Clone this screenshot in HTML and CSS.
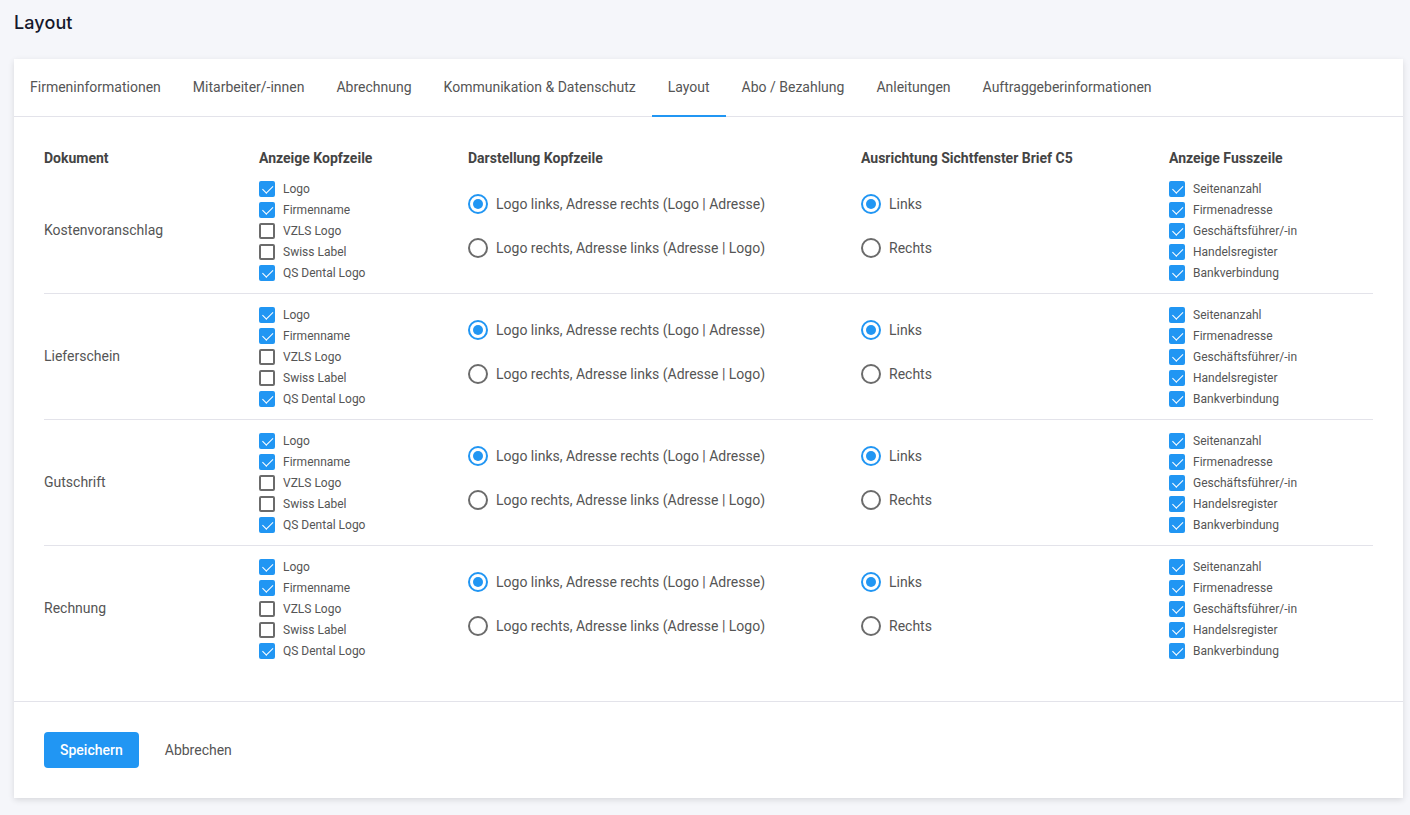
FILE: index.html
```html
<!DOCTYPE html>
<html lang="de">
<head>
<meta charset="utf-8">
<title>Layout</title>
<link rel="stylesheet" href="styles.css">
</head>
<body>
<h1 class="page-title">Layout</h1>
<div class="card">
  <nav class="tabs">
    <span class="tab">Firmeninformationen</span>
    <span class="tab">Mitarbeiter/-innen</span>
    <span class="tab">Abrechnung</span>
    <span class="tab">Kommunikation &amp; Datenschutz</span>
    <span class="tab active">Layout</span>
    <span class="tab">Abo / Bezahlung</span>
    <span class="tab">Anleitungen</span>
    <span class="tab">Auftraggeberinformationen</span>
  </nav>
  <div class="content">
    <div class="grid head">
      <div>Dokument</div>
      <div>Anzeige Kopfzeile</div>
      <div>Darstellung Kopfzeile</div>
      <div>Ausrichtung Sichtfenster Brief C5</div>
      <div>Anzeige Fusszeile</div>
    </div>

    <div class="grid row">
      <div class="doc">Kostenvoranschlag</div>
      <div class="checks">
        <label class="cb"><span class="box on"></span>Logo</label>
        <label class="cb"><span class="box on"></span>Firmenname</label>
        <label class="cb"><span class="box"></span>VZLS Logo</label>
        <label class="cb"><span class="box"></span>Swiss Label</label>
        <label class="cb"><span class="box on"></span>QS Dental Logo</label>
      </div>
      <div class="radios">
        <label class="rd"><span class="circle on"></span>Logo links, Adresse rechts (Logo | Adresse)</label>
        <label class="rd"><span class="circle"></span>Logo rechts, Adresse links (Adresse | Logo)</label>
      </div>
      <div class="radios">
        <label class="rd"><span class="circle on"></span>Links</label>
        <label class="rd"><span class="circle"></span>Rechts</label>
      </div>
      <div class="checks">
        <label class="cb"><span class="box on"></span>Seitenanzahl</label>
        <label class="cb"><span class="box on"></span>Firmenadresse</label>
        <label class="cb"><span class="box on"></span>Geschäftsführer/-in</label>
        <label class="cb"><span class="box on"></span>Handelsregister</label>
        <label class="cb"><span class="box on"></span>Bankverbindung</label>
      </div>
    </div>

    <div class="grid row">
      <div class="doc">Lieferschein</div>
      <div class="checks">
        <label class="cb"><span class="box on"></span>Logo</label>
        <label class="cb"><span class="box on"></span>Firmenname</label>
        <label class="cb"><span class="box"></span>VZLS Logo</label>
        <label class="cb"><span class="box"></span>Swiss Label</label>
        <label class="cb"><span class="box on"></span>QS Dental Logo</label>
      </div>
      <div class="radios">
        <label class="rd"><span class="circle on"></span>Logo links, Adresse rechts (Logo | Adresse)</label>
        <label class="rd"><span class="circle"></span>Logo rechts, Adresse links (Adresse | Logo)</label>
      </div>
      <div class="radios">
        <label class="rd"><span class="circle on"></span>Links</label>
        <label class="rd"><span class="circle"></span>Rechts</label>
      </div>
      <div class="checks">
        <label class="cb"><span class="box on"></span>Seitenanzahl</label>
        <label class="cb"><span class="box on"></span>Firmenadresse</label>
        <label class="cb"><span class="box on"></span>Geschäftsführer/-in</label>
        <label class="cb"><span class="box on"></span>Handelsregister</label>
        <label class="cb"><span class="box on"></span>Bankverbindung</label>
      </div>
    </div>

    <div class="grid row">
      <div class="doc">Gutschrift</div>
      <div class="checks">
        <label class="cb"><span class="box on"></span>Logo</label>
        <label class="cb"><span class="box on"></span>Firmenname</label>
        <label class="cb"><span class="box"></span>VZLS Logo</label>
        <label class="cb"><span class="box"></span>Swiss Label</label>
        <label class="cb"><span class="box on"></span>QS Dental Logo</label>
      </div>
      <div class="radios">
        <label class="rd"><span class="circle on"></span>Logo links, Adresse rechts (Logo | Adresse)</label>
        <label class="rd"><span class="circle"></span>Logo rechts, Adresse links (Adresse | Logo)</label>
      </div>
      <div class="radios">
        <label class="rd"><span class="circle on"></span>Links</label>
        <label class="rd"><span class="circle"></span>Rechts</label>
      </div>
      <div class="checks">
        <label class="cb"><span class="box on"></span>Seitenanzahl</label>
        <label class="cb"><span class="box on"></span>Firmenadresse</label>
        <label class="cb"><span class="box on"></span>Geschäftsführer/-in</label>
        <label class="cb"><span class="box on"></span>Handelsregister</label>
        <label class="cb"><span class="box on"></span>Bankverbindung</label>
      </div>
    </div>

    <div class="grid row last">
      <div class="doc">Rechnung</div>
      <div class="checks">
        <label class="cb"><span class="box on"></span>Logo</label>
        <label class="cb"><span class="box on"></span>Firmenname</label>
        <label class="cb"><span class="box"></span>VZLS Logo</label>
        <label class="cb"><span class="box"></span>Swiss Label</label>
        <label class="cb"><span class="box on"></span>QS Dental Logo</label>
      </div>
      <div class="radios">
        <label class="rd"><span class="circle on"></span>Logo links, Adresse rechts (Logo | Adresse)</label>
        <label class="rd"><span class="circle"></span>Logo rechts, Adresse links (Adresse | Logo)</label>
      </div>
      <div class="radios">
        <label class="rd"><span class="circle on"></span>Links</label>
        <label class="rd"><span class="circle"></span>Rechts</label>
      </div>
      <div class="checks">
        <label class="cb"><span class="box on"></span>Seitenanzahl</label>
        <label class="cb"><span class="box on"></span>Firmenadresse</label>
        <label class="cb"><span class="box on"></span>Geschäftsführer/-in</label>
        <label class="cb"><span class="box on"></span>Handelsregister</label>
        <label class="cb"><span class="box on"></span>Bankverbindung</label>
      </div>
    </div>
  </div>
  <div class="actions">
    <button class="btn-primary">Speichern</button>
    <button class="btn-text">Abbrechen</button>
  </div>
</div>
</body>
</html>
```
FILE: styles.css
```css
* { box-sizing: border-box; }
html, body { margin: 0; }
body {
  background: #f5f6fa;
  font-family: Roboto, "Liberation Sans", Arial, sans-serif;
  color: #555;
  padding: 0 7px 0 14px;
  min-height: 815px;
}
.page-title {
  margin: 0;
  padding-top: 11px;
  line-height: 24px;
  font-family: Inter, "Open Sans", sans-serif;
  font-size: 18px;
  font-weight: 500;
  color: #16192c;
  letter-spacing: 0.1px;
  margin-bottom: 24px;
}
.card {
  background: #fff;
  box-shadow: 0 2px 6px rgba(0,0,0,0.12);
}
.tabs {
  display: flex;
  height: 58px;
  border-bottom: 1px solid #e3e3ea;
}
.tab {
  padding: 0 16px;
  line-height: 57px;
  font-size: 14px;
  color: #555;
  white-space: nowrap;
  position: relative;
}
.tab.active::after {
  content: "";
  position: absolute;
  left: 0;
  right: 0;
  bottom: -1px;
  height: 2px;
  background: #2196f3;
}
.content {
  padding: 31px 30px 30px 30px;
  border-bottom: 1px solid #e3e3ea;
}
.grid {
  display: grid;
  grid-template-columns: 215px 209px 393px 308px 1fr;
}
.head {
  font-size: 14px;
  font-weight: 700;
  color: #444;
  line-height: 20px;
}
.row {
  padding: 10px 0;
  border-bottom: 1px solid #e3e3ea;
}
.row.last { border-bottom: none; }
.doc {
  align-self: center;
  font-size: 14px;
  color: #555;
  margin-bottom: 2px;
}
.checks {
  display: flex;
  flex-direction: column;
}
.cb {
  display: flex;
  align-items: center;
  height: 21px;
  font-size: 12px;
  color: #555;
}
.box {
  width: 16px;
  height: 16px;
  border: 2px solid #6b6b6b;
  border-radius: 2px;
  margin-right: 8px;
  position: relative;
  flex: none;
}
.box.on {
  background: #2196f3;
  border-color: #2196f3;
}
.box.on::after {
  content: "";
  position: absolute;
  left: 3.5px;
  top: 0;
  width: 4.5px;
  height: 8.5px;
  border: solid #fff;
  border-width: 0 1.6px 1.6px 0;
  transform: rotate(45deg);
}
.radios {
  display: flex;
  flex-direction: column;
  gap: 20px;
  padding-top: 14px;
}
.rd {
  display: flex;
  align-items: center;
  height: 24px;
  font-size: 14px;
  color: #555;
}
.circle {
  width: 20px;
  height: 20px;
  border: 2px solid #6b6b6b;
  border-radius: 50%;
  margin-right: 8px;
  flex: none;
  position: relative;
}
.circle.on { border-color: #2196f3; }
.circle.on::after {
  content: "";
  position: absolute;
  left: 3px;
  top: 3px;
  width: 10px;
  height: 10px;
  border-radius: 50%;
  background: #2196f3;
}
.actions {
  display: flex;
  align-items: center;
  gap: 10px;
  padding: 30px;
}
.btn-primary {
  height: 36px;
  padding: 0 16px;
  border: none;
  border-radius: 4px;
  background: #2196f3;
  color: #fff;
  font-family: Roboto, "Liberation Sans", sans-serif;
  font-size: 14px;
  font-weight: 500;
}
.btn-text {
  height: 36px;
  padding: 0 16px;
  border: none;
  background: none;
  color: #555;
  font-family: Roboto, "Liberation Sans", sans-serif;
  font-size: 14px;
}
```
